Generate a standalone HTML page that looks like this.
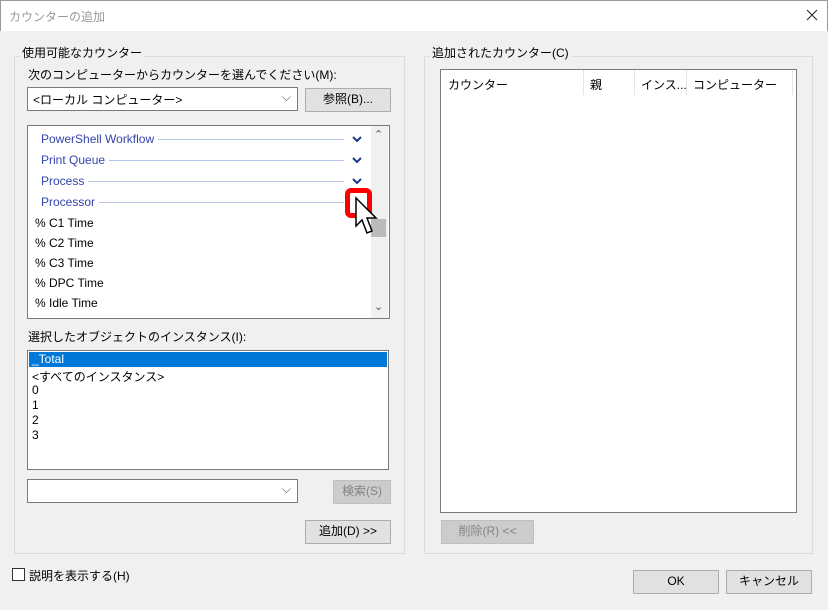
<!DOCTYPE html>
<html><head><meta charset="utf-8"><style>
*{box-sizing:border-box;margin:0;padding:0}
body{width:828px;height:610px;background:#f0f0f0;font-family:"Liberation Sans","Noto Sans CJK JP",sans-serif;font-size:12px;color:#000;position:relative;overflow:hidden}
.a{position:absolute}
.title{left:0;top:0;width:828px;height:31px;background:#fff;border:1px solid #999;border-bottom:none}
.grp{border:1px solid #dcdcdc}
.lbl{background:#f0f0f0;padding:0 2px;white-space:nowrap}
.box{background:#fff;border:1px solid #7a7a7a}
.btn{background:#e1e1e1;border:1px solid #adadad;text-align:center;line-height:21px}
.dis{color:#838383;background:#cccccc;border-color:#bfbfbf}
.cat{color:#3344aa;white-space:nowrap;display:flex;align-items:center;height:14px}
.cat span.l{flex:1;height:1px;background:#b8c4e8;margin:0 22px 0 4px}
.it{white-space:nowrap}
</style></head><body>
<div class="a title"></div>
<div class="a" style="left:9px;top:8px;color:#999;font-size:12px">カウンターの追加</div>
<svg class="a" style="left:806px;top:9px" width="12" height="12"><path d="M1 1L11 11M11 1L1 11" stroke="#333" stroke-width="1.2"/></svg>

<div class="a grp" style="left:14px;top:56px;width:391px;height:498px"></div>
<div class="a lbl" style="left:20px;top:44px">使用可能なカウンター</div>
<div class="a" style="left:28px;top:66px">次のコンピューターからカウンターを選んでください(M):</div>
<div class="a box" style="left:27px;top:87px;width:271px;height:24px;padding:3px 5px">&lt;ローカル コンピューター&gt;<span class="a" style="right:6px;top:2px;color:#555">⌵</span></div>
<div class="a btn" style="left:305px;top:88px;width:86px;height:24px">参照(B)...</div>

<div class="a box" style="left:27px;top:125px;width:363px;height:194px"></div>
<div class="a" style="left:371px;top:126px;width:17px;height:192px;background:#f0f0f0"></div>
<div class="a" style="left:374px;top:128px;color:#555;font-size:11px">⌃</div>
<div class="a" style="left:374px;top:300px;color:#555;font-size:11px">⌄</div>
<div class="a cat" style="left:41px;top:132px;width:325px">PowerShell Workflow<span class="l"></span></div>
<div class="a cat" style="left:41px;top:153px;width:325px">Print Queue<span class="l"></span></div>
<div class="a cat" style="left:41px;top:174px;width:325px">Process<span class="l"></span></div>
<div class="a cat" style="left:41px;top:195px;width:325px">Processor<span class="l"></span></div>
<svg class="a" style="left:350px;top:130px" width="16" height="60"><g fill="none" stroke="#1a3a8a" stroke-width="2"><path d="M3 7l4 4 4-4"/><path d="M3 28l4 4 4-4"/><path d="M3 49l4 4 4-4"/></g></svg>
<div class="a" style="left:345px;top:188px;width:27px;height:30px;border:5px solid #f00;border-radius:6px"></div>
<div class="a" style="left:371px;top:219px;width:15px;height:18px;background:#bbb"></div>
<svg class="a" style="left:354px;top:196px" width="26" height="44"><path d="M2 2 L2 30 L8 24 L13 37 L18 35 L13 22 L22 22 Z" fill="#fff" stroke="#000" stroke-width="1.5"/></svg>
<div class="a it" style="left:35px;top:216px">% C1 Time</div>
<div class="a it" style="left:35px;top:236px">% C2 Time</div>
<div class="a it" style="left:35px;top:256px">% C3 Time</div>
<div class="a it" style="left:35px;top:276px">% DPC Time</div>
<div class="a it" style="left:35px;top:296px">% Idle Time</div>

<div class="a" style="left:28px;top:328px">選択したオブジェクトのインスタンス(I):</div>
<div class="a box" style="left:27px;top:350px;width:362px;height:120px"></div>
<div class="a" style="left:29px;top:352px;width:358px;height:15px;background:#0078d7;color:#fff;padding-left:3px;line-height:15px">_Total</div>
<div class="a it" style="left:32px;top:368px">&lt;すべてのインスタンス&gt;</div>
<div class="a it" style="left:32px;top:383px">0</div>
<div class="a it" style="left:32px;top:398px">1</div>
<div class="a it" style="left:32px;top:413px">2</div>
<div class="a it" style="left:32px;top:428px">3</div>

<div class="a box" style="left:27px;top:479px;width:271px;height:24px"><span class="a" style="right:6px;top:2px;color:#555">⌵</span></div>
<div class="a btn dis" style="left:333px;top:480px;width:58px;height:24px">検索(S)</div>
<div class="a btn" style="left:305px;top:520px;width:86px;height:24px">追加(D) &gt;&gt;</div>

<div class="a grp" style="left:424px;top:56px;width:389px;height:498px"></div>
<div class="a lbl" style="left:430px;top:44px">追加されたカウンター(C)</div>
<div class="a box" style="left:440px;top:69px;width:357px;height:444px"></div>
<div class="a" style="left:441px;top:70px;width:351px;height:26px;background:#fff"></div>
<div class="a" style="left:583px;top:70px;width:1px;height:25px;background:#e5e5e5"></div>
<div class="a" style="left:634px;top:70px;width:1px;height:25px;background:#e5e5e5"></div>
<div class="a" style="left:686px;top:70px;width:1px;height:25px;background:#e5e5e5"></div>
<div class="a" style="left:792px;top:70px;width:1px;height:25px;background:#e5e5e5"></div>
<div class="a it" style="left:448px;top:76px">カウンター</div>
<div class="a it" style="left:590px;top:76px">親</div>
<div class="a it" style="left:641px;top:76px">インス...</div>
<div class="a it" style="left:693px;top:76px">コンピューター</div>
<div class="a btn dis" style="left:441px;top:520px;width:93px;height:24px">削除(R) &lt;&lt;</div>

<div class="a" style="left:12px;top:568px;width:13px;height:13px;border:1px solid #333;background:#fff"></div>
<div class="a it" style="left:29px;top:567px">説明を表示する(H)</div>
<div class="a btn" style="left:633px;top:570px;width:86px;height:24px">OK</div>
<div class="a btn" style="left:726px;top:570px;width:86px;height:24px">キャンセル</div>
</body></html>
